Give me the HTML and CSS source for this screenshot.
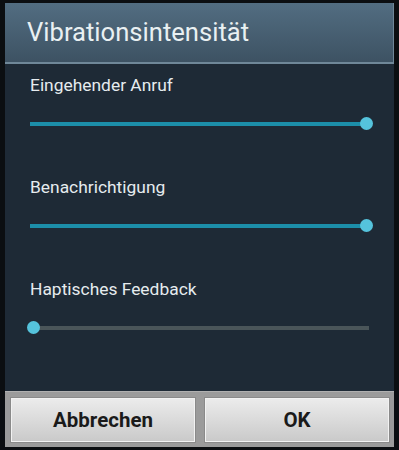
FILE: index.html
```html
<!DOCTYPE html>
<html lang="de">
<head>
<meta charset="utf-8">
<title>Vibrationsintensität</title>
<link rel="stylesheet" href="styles.css">
</head>
<body>
<div class="dialog">
  <div class="title">Vibrationsintensität</div>
  <div class="content">
    <div class="setting">
      <div class="label">Eingehender Anruf</div>
      <div class="slider">
        <div class="track"><div class="fill" style="width:100%"></div></div>
        <div class="thumb" style="--v:1"></div>
      </div>
    </div>
    <div class="setting">
      <div class="label">Benachrichtigung</div>
      <div class="slider">
        <div class="track"><div class="fill" style="width:100%"></div></div>
        <div class="thumb" style="--v:1"></div>
      </div>
    </div>
    <div class="setting">
      <div class="label">Haptisches Feedback</div>
      <div class="slider">
        <div class="track"><div class="fill" style="width:0%"></div></div>
        <div class="thumb" style="--v:0"></div>
      </div>
    </div>
  </div>
  <div class="buttons">
    <button class="btn">Abbrechen</button>
    <button class="btn">OK</button>
  </div>
</div>
</body>
</html>
```

FILE: styles.css
```css
html, body {
  margin: 0;
  padding: 0;
  background: #0b0e11;
  width: 399px;
  height: 450px;
  overflow: hidden;
}
body {
  font-family: Roboto, "Noto Sans", sans-serif;
  padding-top: 3px;
  padding-left: 5px;
  box-sizing: border-box;
}
.dialog {
  width: 389px;
  display: flex;
  flex-direction: column;
}
.title {
  height: 61px;
  box-sizing: border-box;
  background: linear-gradient(#526d81, #3d5263);
  border-bottom: 2px solid #6f8798;
  border-right: 1px solid #6f8798;
  color: #e9f0f2;
  font-size: 25.6px;
  padding-left: 22px;
  line-height: 59px;
}
.content {
  background: #1e2a36;
  height: 327px;
  padding: 10px 0 0 25px;
  box-sizing: border-box;
}
.setting {
  height: 102px;
}
.label {
  color: #e6ecef;
  font-size: 17.4px;
  line-height: 22px;
}
.slider {
  position: relative;
  margin-top: 21px;
  width: 339px;
  height: 13px;
  display: flex;
  align-items: center;
}
.track {
  width: 100%;
  height: 4px;
  background: #4a5559;
}
.fill {
  height: 100%;
  background: #1c8ea9;
}
.thumb {
  position: absolute;
  top: 0;
  left: calc(3px + (100% - 6px) * var(--v));
  width: 13px;
  height: 13px;
  margin-left: -6.5px;
  border-radius: 50%;
  background: #55c3dc;
}
.buttons {
  height: 56px;
  box-sizing: border-box;
  background: #9b9b9b;
  border-top: 1px solid #b0b0b0;
  padding: 5px 4px 4px 5px;
  display: flex;
  gap: 8px;
}
.btn {
  flex: 1;
  margin: 0;
  border: 1px solid #8a8a8a;
  box-shadow: inset 0 0 0 1px #f2f2f2;
  background: linear-gradient(#ececec, #c9c9c9);
  font-family: Roboto, "Noto Sans", sans-serif;
  font-weight: bold;
  font-size: 20.5px;
  color: #1a1a1a;
  padding: 0;
}
```
